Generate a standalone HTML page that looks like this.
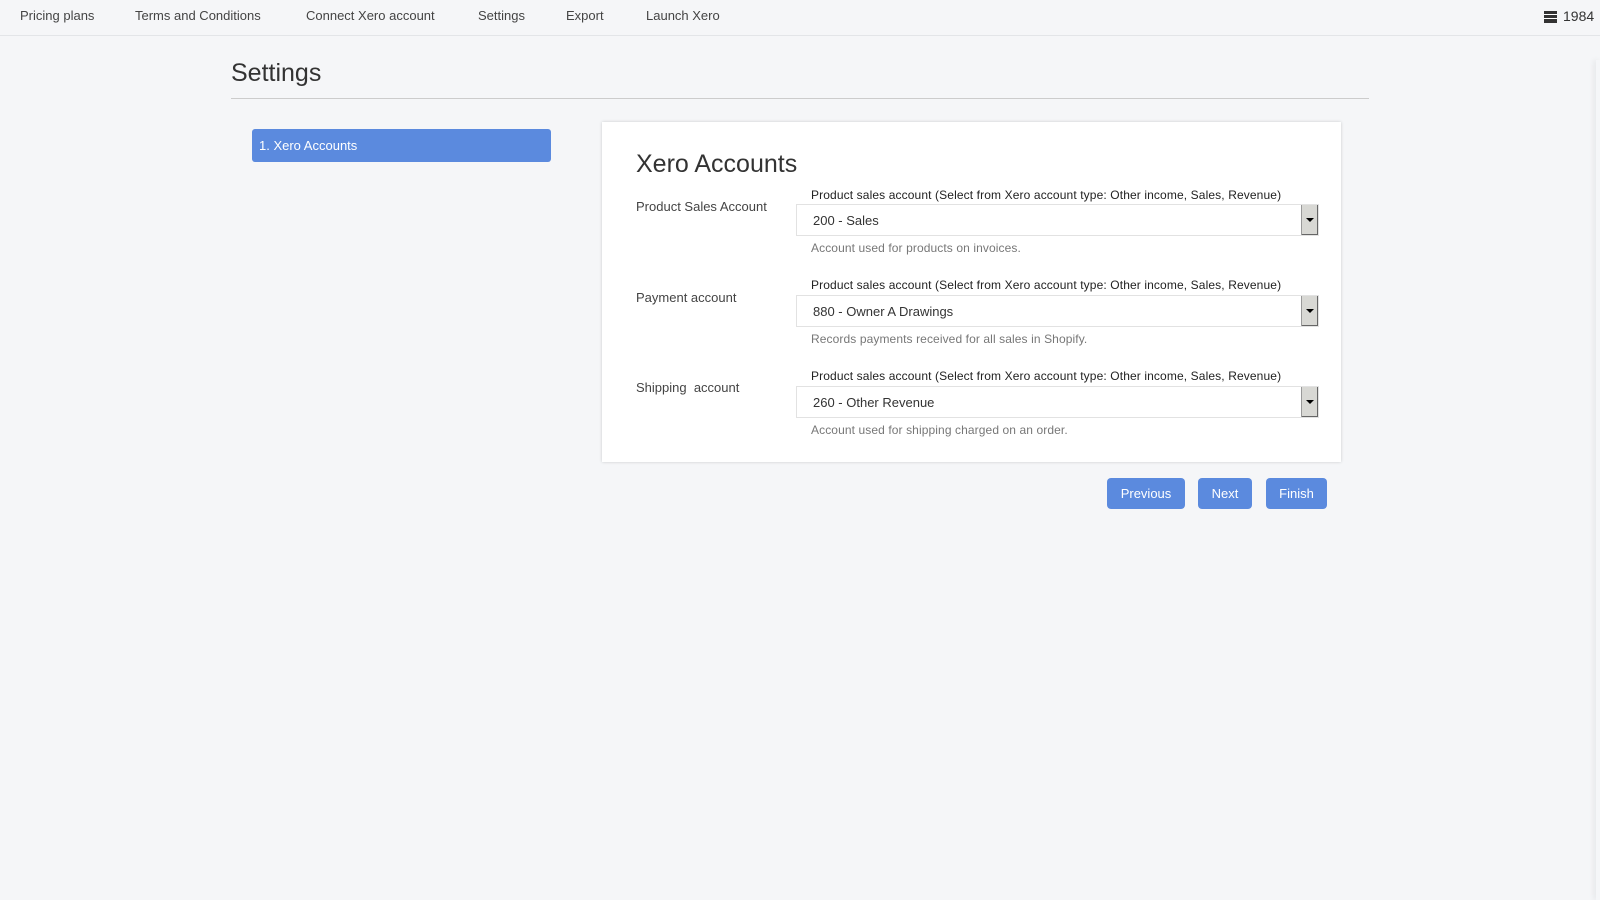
<!DOCTYPE html>
<html><head><style>
body{margin:0;width:1600px;height:900px;background:#f5f6f8;font-family:"Liberation Sans",sans-serif;color:#333;position:relative;overflow:hidden}
.a{position:absolute;white-space:nowrap}
.nav{position:absolute;left:0;top:0;width:1600px;height:35px;border-bottom:1px solid #e3e5e8;background:#f5f6f8}
.nav span{position:absolute;top:8px;font-size:13px;color:#444}
.card{position:absolute;left:602px;top:122px;width:739px;height:340px;background:#fff;box-shadow:0 0 3px rgba(0,0,0,.18)}
.lbl{font-size:13px;color:#444}
.top{font-size:12px;color:#222;letter-spacing:.12px}
.sel{position:absolute;left:796px;width:523px;height:32px;border:1px solid #e2e2e2;box-sizing:border-box;background:#fff;font-size:13px}
.sel span{position:absolute;left:16px;top:8px}
.sel i{position:absolute;right:0;top:0;width:16px;height:30px;background:#d8d8d4;border-left:1px solid #999;box-shadow:inset -1px -1px 0 #666}
.sel i:after{content:"";position:absolute;left:4px;top:13px;border:4px solid transparent;border-top:4px solid #000}
.help{font-size:12px;color:#777;letter-spacing:.1px}
.btn{position:absolute;top:478px;height:31px;background:#5b8ade;color:#fff;border-radius:4px;font-size:13px;text-align:center;line-height:31px}
</style></head><body>
<div class="nav">
<span style="left:20px">Pricing plans</span>
<span style="left:135px">Terms and Conditions</span>
<span style="left:306px">Connect Xero account</span>
<span style="left:478px">Settings</span>
<span style="left:566px">Export</span>
<span style="left:646px">Launch Xero</span>
<span style="left:1544px;width:13px;height:12px;top:11px;background:linear-gradient(#333 0 3px,#fff 3px 4px,#333 4px 7px,#fff 7px 8px,#333 8px 11px)"></span>
<span style="left:1563px;top:8px;font-size:14px;color:#333">1984</span>
</div>
<div class="a" style="left:231px;top:59px;font-size:25px;color:#333">Settings</div>
<div class="a" style="left:231px;top:98px;width:1138px;height:1px;background:#ccc"></div>
<div class="a" style="left:252px;top:129px;width:299px;height:33px;background:#5b8ade;border-radius:3px;color:#fff;font-size:13px;line-height:33px;text-indent:7px">1. Xero Accounts</div>
<div class="card"></div>
<div class="a" style="left:636px;top:150px;font-size:25px;color:#333">Xero Accounts</div>

<div class="a lbl" style="left:636px;top:199px">Product Sales Account</div>
<div class="a top" style="left:811px;top:188px">Product sales account (Select from Xero account type: Other income, Sales, Revenue)</div>
<div class="sel" style="top:204px"><span>200 - Sales</span><i></i></div>
<div class="a help" style="left:811px;top:241px">Account used for products on invoices.</div>

<div class="a lbl" style="left:636px;top:290px">Payment account</div>
<div class="a top" style="left:811px;top:278px">Product sales account (Select from Xero account type: Other income, Sales, Revenue)</div>
<div class="sel" style="top:295px"><span>880 - Owner A Drawings</span><i></i></div>
<div class="a help" style="left:811px;top:332px">Records payments received for all sales in Shopify.</div>

<div class="a lbl" style="left:636px;top:380px">Shipping&nbsp; account</div>
<div class="a top" style="left:811px;top:369px">Product sales account (Select from Xero account type: Other income, Sales, Revenue)</div>
<div class="sel" style="top:386px"><span>260 - Other Revenue</span><i></i></div>
<div class="a help" style="left:811px;top:423px">Account used for shipping charged on an order.</div>

<div class="btn" style="left:1107px;width:78px">Previous</div>
<div class="btn" style="left:1198px;width:54px">Next</div>
<div class="btn" style="left:1266px;width:61px">Finish</div>
<div class="a" style="left:1596px;top:60px;width:4px;height:840px;box-shadow:-2px 0 6px rgba(0,0,0,.08)"></div>
</body></html>
